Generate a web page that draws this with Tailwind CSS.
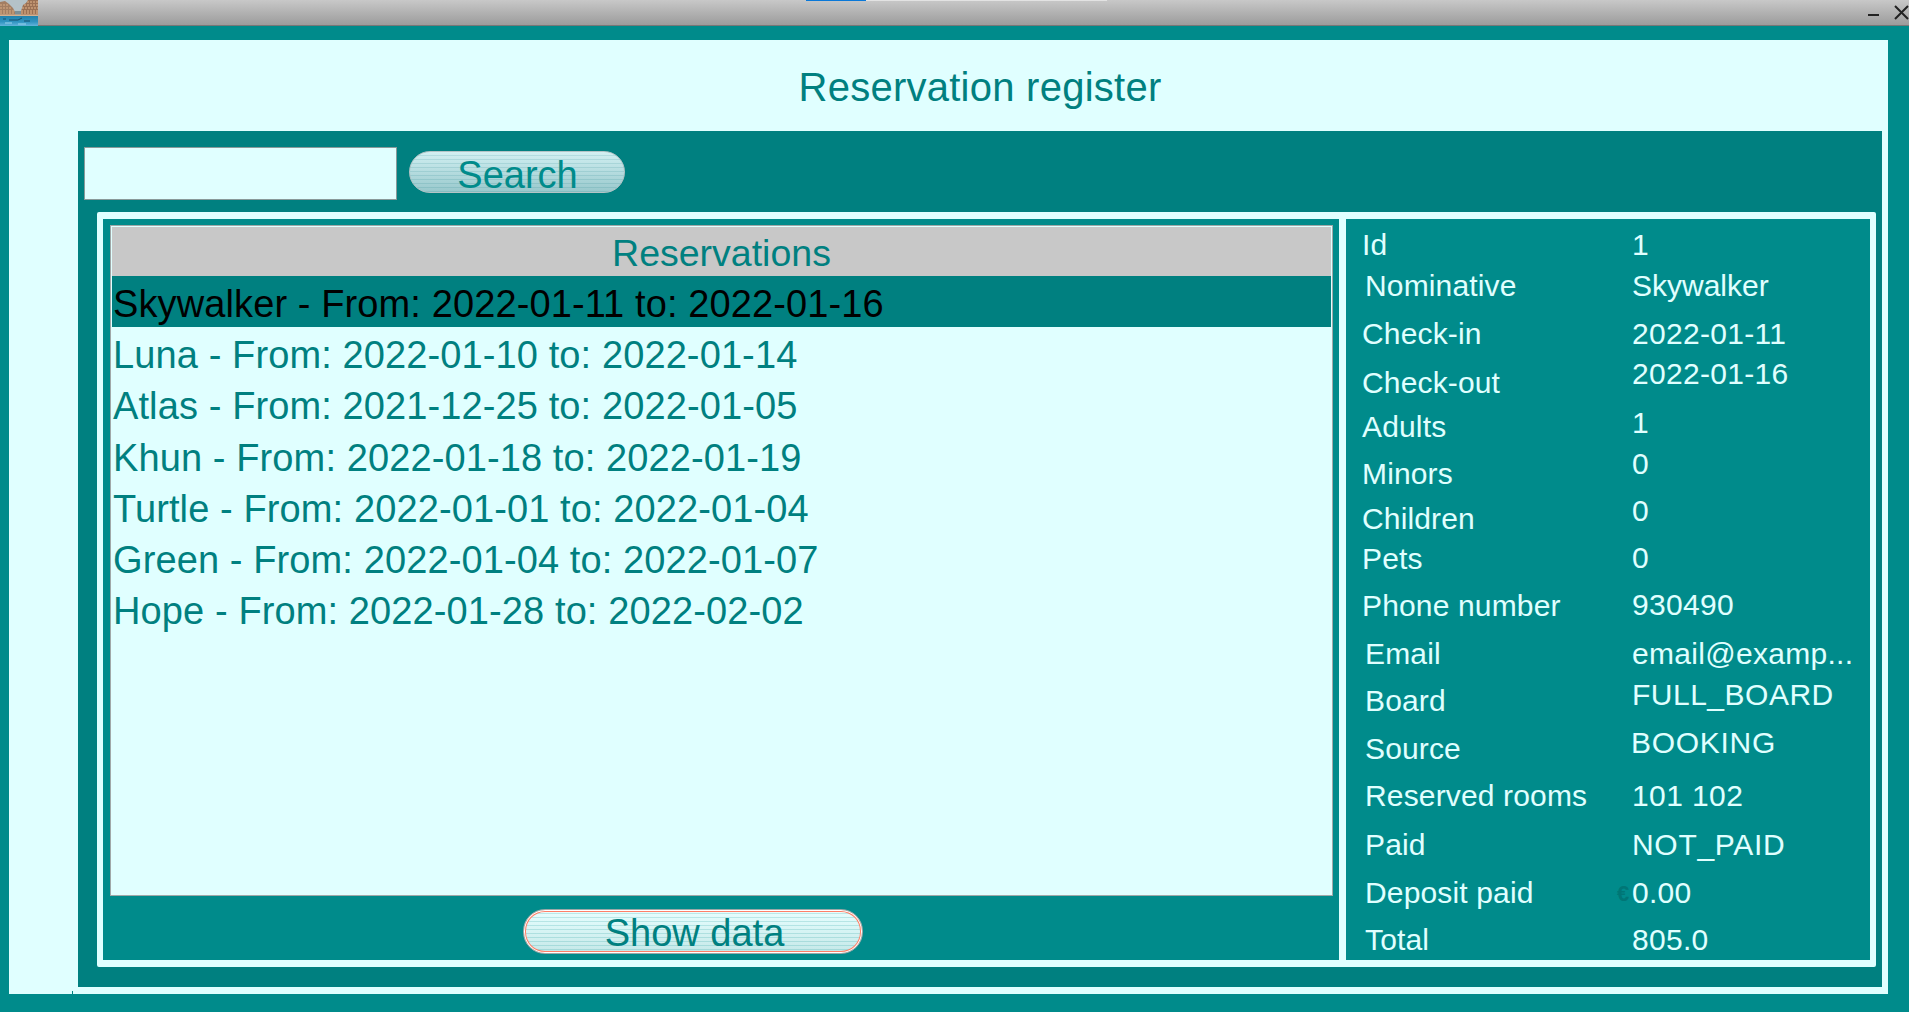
<!DOCTYPE html>
<html>
<head>
<meta charset="utf-8">
<title>Reservation register</title>
<script src="https://cdn.jsdelivr.net/npm/@tailwindcss/browser@4"></script>
</head>
<body class="m-0 overflow-hidden">
<div class="w-[1909px] h-[1012px] flex flex-col overflow-hidden bg-[#008b8b] font-['Liberation_Sans',Arial,sans-serif]">
  <!-- title bar -->
  <div class="relative h-[26px] shrink-0 flex items-start border-b border-[#777] bg-gradient-to-b from-[#c8c8c8] to-[#9c9c9c]">
    <svg class="w-[38px] h-[26px] shrink-0" viewBox="0 0 38 26" preserveAspectRatio="none">
      <defs>
        <linearGradient id="w" x1="0" y1="0" x2="0" y2="1">
          <stop offset="0" stop-color="#1f7fa8"/>
          <stop offset="0.6" stop-color="#2f93c0"/>
          <stop offset="1" stop-color="#63b4dc"/>
        </linearGradient>
      </defs>
      <rect width="38" height="26" fill="#b4c2c8"/>
      <path d="M0 2 L5 1 L9 4 L13 8 L15 12 L15 15 L0 15 Z" fill="#a37e62"/>
      <path d="M0 5h8M0 8h12M0 11h14M0 13h15" stroke="#d8ac84" stroke-width="1" stroke-dasharray="2 1"/>
      <path d="M38 0 L28 0 L26 3 L23 5 L21 11 L21 15 L38 15 Z" fill="#9a7054"/>
      <path d="M27 2h11M24 5h14M22 8h16M21 11h17M21 13h17" stroke="#e2b48a" stroke-width="1" stroke-dasharray="2 1"/>
      <rect x="15" y="11" width="6" height="4" fill="#7d8f96"/>
      <rect y="15" width="38" height="11" fill="url(#w)"/>
      <rect y="14.5" width="38" height="1.5" fill="#d4b090"/>
      <path d="M9 20 h9 l4 -2 M24 21 h6 M3 19 h3" stroke="#14506e" stroke-width="1" fill="none"/>
      <path d="M5 23 h7 M18 24 h8" stroke="#9bd4ee" stroke-width="1" fill="none"/>
    </svg>
    <div class="absolute left-[806px] top-0 w-[60px] h-px bg-[#0a78d8]"></div>
    <div class="absolute left-[866px] top-0 w-[241px] h-px bg-[#e2e2e2]"></div>
    <div class="absolute left-[1868px] top-[14px] w-[11px] h-[2px] bg-[#222]"></div>
    <svg class="absolute left-[1894px] top-[5px] w-[15px] h-[15px]" viewBox="0 0 15 15"><path d="M1 1 L14 14 M14 1 L1 14" stroke="#222" stroke-width="2" fill="none"/></svg>
  </div>

  <!-- light page -->
  <div class="flex-1 flex flex-col mt-[14px] ml-[9px] mr-[21px] mb-[18px] bg-[#e0ffff]">
    <div class="h-[91px] shrink-0 flex items-center justify-center">
      <h1 class="text-[40px] leading-[46px] tracking-[0.25px] font-normal text-[#008080] ml-[63px] mt-[2px]">Reservation register</h1>
    </div>

    <!-- dark panel -->
    <div class="relative flex-1 flex flex-col ml-[69px] mr-[6px] mb-[7px] bg-[#008080]">
      <div class="absolute left-[-6px] bottom-[-7px] w-px h-[3px] bg-[#008080]"></div>
      <div class="h-[81px] shrink-0 flex items-start pl-[6px] pt-[16px]">
        <input type="text" class="w-[313px] h-[53px] bg-[#e0ffff] border border-[#8a9a9a] outline-none">
        <button class="ml-[12px] mt-[4px] w-[216px] h-[42px] pt-[2px] pl-[1px] rounded-[21px] border border-[#b4c4c6] text-[#008b8b] text-[38px] leading-[42px] [background:repeating-linear-gradient(180deg,transparent_0,transparent_3px,rgba(0,110,120,0.13)_3px,rgba(0,110,120,0.13)_4px),linear-gradient(180deg,#d2f0f2,#98c8cc)]">Search</button>
      </div>

      <!-- bordered group -->
      <div class="flex-1 flex ml-[19px] mr-[6px] mb-[20px] border-x-[6px] border-y-[7px] border-[#e0ffff] rounded-[2px] bg-[#008b8b]">
        <!-- left pane -->
        <div class="w-[1236px] shrink-0 flex flex-col pl-[7px] pr-[6px] pt-[6px]">
          <div class="h-[671px] shrink-0 border border-[#a0a8a8] p-px bg-[#e0ffff] flex flex-col">
            <div class="h-[49px] shrink-0 bg-[#c8c8c8] text-center text-[37.5px] leading-[53px] text-[#008080]">Reservations</div>
            <ul class="flex flex-col text-[38px] leading-[57px] tracking-[0.11px] text-[#008080] pl-[1px] whitespace-nowrap">
              <li class="bg-[#008080] text-black h-[51.2px] ml-[-1px] pl-[1px]">Skywalker - From: 2022-01-11 to: 2022-01-16</li>
              <li class="h-[51.2px]">Luna - From: 2022-01-10 to: 2022-01-14</li>
              <li class="h-[51.2px]">Atlas - From: 2021-12-25 to: 2022-01-05</li>
              <li class="h-[51.2px]">Khun - From: 2022-01-18 to: 2022-01-19</li>
              <li class="h-[51.2px]">Turtle - From: 2022-01-01 to: 2022-01-04</li>
              <li class="h-[51.2px]">Green - From: 2022-01-04 to: 2022-01-07</li>
              <li class="h-[51.2px]">Hope - From: 2022-01-28 to: 2022-02-02</li>
            </ul>
          </div>
          <button class="ml-[413px] mt-[13px] w-[340px] h-[45px] pt-[2px] pl-[3px] rounded-[22px] border border-[#9aa8a8] shadow-[inset_0_0_0_1px_#fff,inset_0_0_0_2px_#ff8068] text-[#008080] text-[38px] leading-[42px] [background:repeating-linear-gradient(180deg,transparent_0,transparent_3px,rgba(0,140,140,0.18)_3px,rgba(0,140,140,0.18)_4px),linear-gradient(180deg,#e8ffff,#c4e8e8)]">Show data</button>
        </div>

        <!-- divider + details -->
        <div class="relative flex-1 border-l-[7px] border-[#e0ffff] flex text-[30px] leading-[34px] text-[#e0ffff] whitespace-nowrap pt-[9px]">
          <div class="flex flex-col w-[287px] shrink-0 pl-[16px] tracking-[0.15px]">
            <div class="h-[41px]">Id</div>
            <div class="h-[48px] pl-[3px]">Nominative</div>
            <div class="h-[49px]">Check-in</div>
            <div class="h-[44px]">Check-out</div>
            <div class="h-[47px]">Adults</div>
            <div class="h-[45px]">Minors</div>
            <div class="h-[40px]">Children</div>
            <div class="h-[47px]">Pets</div>
            <div class="h-[48px]">Phone number</div>
            <div class="h-[47px] pl-[3px]">Email</div>
            <div class="h-[48px] pl-[3px]">Board</div>
            <div class="h-[47px] pl-[3px]">Source</div>
            <div class="h-[49px] pl-[3px]">Reserved rooms</div>
            <div class="h-[48px] pl-[3px]">Paid</div>
            <div class="h-[47px] pl-[3px]">Deposit paid</div>
            <div class="h-[34px] pl-[3px]">Total</div>
          </div>
          <div class="flex flex-col ml-[-1px]">
            <div class="h-[41px]">1</div>
            <div class="h-[48px]">Skywalker</div>
            <div class="h-[40px] tracking-[0.3px]">2022-01-11</div>
            <div class="h-[49px] tracking-[0.3px]">2022-01-16</div>
            <div class="h-[41px]">1</div>
            <div class="h-[47px]">0</div>
            <div class="h-[47px]">0</div>
            <div class="h-[47px]">0</div>
            <div class="h-[49px] tracking-[0.3px]">930490</div>
            <div class="h-[41px] tracking-[0.3px]">email@examp...</div>
            <div class="h-[48px] tracking-[0.5px]">FULL_BOARD</div>
            <div class="h-[53px] tracking-[0.7px] ml-[-1px]">BOOKING</div>
            <div class="h-[49px] tracking-[0.4px]">101 102</div>
            <div class="h-[48px] tracking-[0.7px]">NOT_PAID</div>
            <div class="h-[47px] tracking-[0.3px]">0.00</div>
            <div class="h-[34px] tracking-[0.3px]">805.0</div>
          </div>
          <span class="absolute left-[271px] top-[662px] text-[22px] leading-[26px] font-bold text-[#007676]">€</span>
        </div>
      </div>
    </div>
  </div>
</div>
</body>
</html>
